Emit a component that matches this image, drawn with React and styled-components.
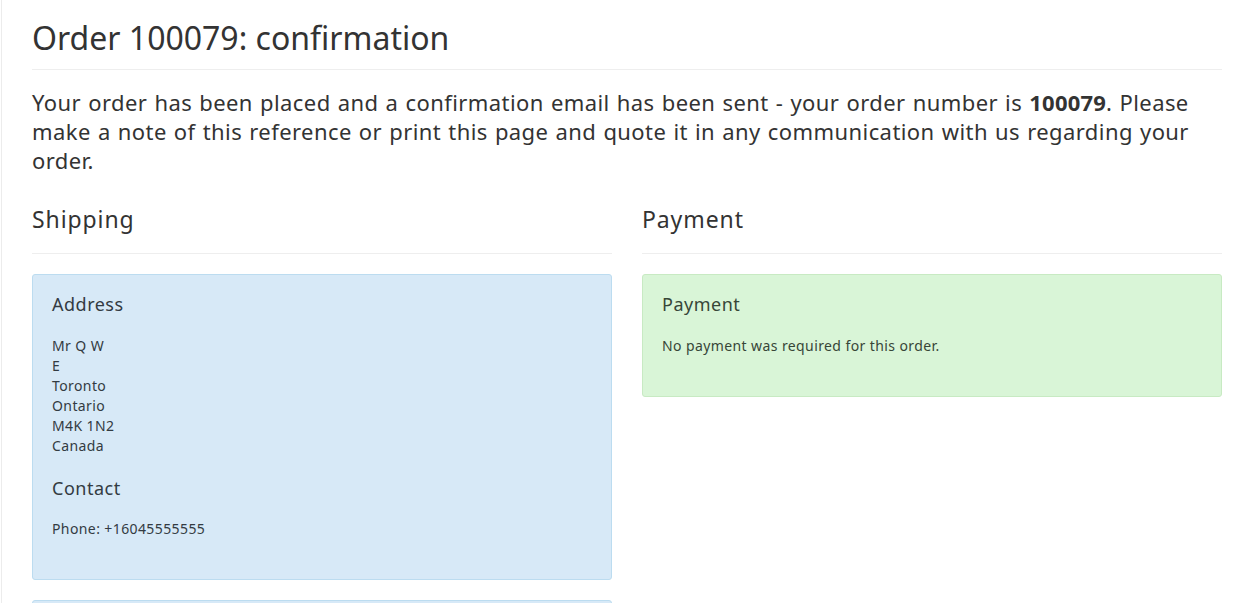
import React from "react";
import styled, { createGlobalStyle } from "styled-components";

const Global = createGlobalStyle`
  html, body { margin: 0; padding: 0; background: #fff; }
  body { font-family: "Noto Sans", "DejaVu Sans", sans-serif; color: #333; }
  * { box-sizing: border-box; }
`;

const Page = styled.div`
  margin-left: 1px;
  border-left: 1px solid #ececec;
  height: 603px;
  overflow: hidden;
  padding: 16px 16px 0 30px;
`;

const Title = styled.h1`
  margin: 0;
  font-size: 32px;
  font-weight: 400;
  line-height: 44px;
  color: #333;
  padding-bottom: 9px;
  border-bottom: 1px solid #eee;
`;

const Lead = styled.p`
  margin: 18px 0 0;
  font-size: 22px;
  letter-spacing: 0.42px;
  word-spacing: 1px;
  line-height: 29px;
  color: #333;
  b { font-weight: 700; letter-spacing: 0.2px; }
`;

const Columns = styled.div`
  display: grid;
  grid-template-columns: 1fr 1fr;
  column-gap: 30px;
  margin-top: 15px;
`;

const Column = styled.div`
  display: flex;
  flex-direction: column;
`;

const SectionTitle = styled.h2`
  margin: 0;
  font-size: 23px;
  letter-spacing: 0.9px;
  font-weight: 400;
  line-height: 32px;
  padding: 13px 0 18px;
  border-bottom: 1px solid #eee;
  color: #333;
`;

const Panel = styled.div`
  margin-top: 20px;
  border: 1px solid ${(p) => (p.$tone === "green" ? "#c8eac3" : "#bcdcf0")};
  background: ${(p) => (p.$tone === "green" ? "#d9f5d7" : "#d7e9f7")};
  color: ${(p) => (p.$tone === "green" ? "#374637" : "#333b42")};
  border-radius: 3px;
  padding: 17px 19px ${(p) => p.$pb || 40}px;
  min-height: ${(p) => p.$mh || 0}px;
`;

const PanelTitle = styled.h4`
  margin: 0 0 ${(p) => p.$mb || 20}px;
  font-size: 18px;
  letter-spacing: 0.5px;
  font-weight: 400;
  line-height: 24px;
`;

const Lines = styled.div`
  font-size: 14px;
  letter-spacing: 0.4px;
  line-height: 20px;
  margin-bottom: ${(p) => p.$mb || 0}px;
`;

export default function App() {
  return (
    <>
      <Global />
      <Page>
        <Title>Order 100079: confirmation</Title>
        <Lead>
          Your order has been placed and a confirmation email has been sent - your order number is <b>100079</b>. Please
          make a note of this reference or print this page and quote it in any communication with us regarding your
          order.
        </Lead>
        <Columns>
          <Column>
            <SectionTitle>Shipping</SectionTitle>
            <Panel $tone="blue" $pb={40}>
              <PanelTitle $mb={20}>Address</PanelTitle>
              <Lines $mb={20}>
                Mr Q W<br />E<br />Toronto<br />Ontario<br />M4K 1N2<br />Canada
              </Lines>
              <PanelTitle $mb={19}>Contact</PanelTitle>
              <Lines>Phone: +16045555555</Lines>
            </Panel>
            <Panel $tone="blue" $mh={40} />
          </Column>
          <Column>
            <SectionTitle>Payment</SectionTitle>
            <Panel $tone="green" $pb={40}>
              <PanelTitle $mb={20}>Payment</PanelTitle>
              <Lines>No payment was required for this order.</Lines>
            </Panel>
          </Column>
        </Columns>
      </Page>
    </>
  );
}
